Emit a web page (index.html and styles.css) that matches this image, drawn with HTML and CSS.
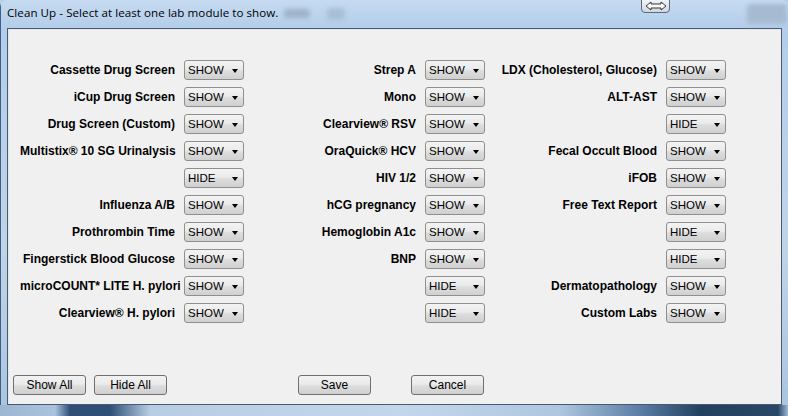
FILE: index.html
```html
<!DOCTYPE html>
<html>
<head>
<meta charset="utf-8">
<link rel="stylesheet" href="styles.css">
</head>
<body>
<div class="window">
  <div class="titlebar">
    <span class="title">Clean Up - Select at least one lab module to show.</span>
    <span class="blur b1"></span><span class="blur b2"></span><span class="blur b3"></span>
    <span class="resize"><svg width="22" height="10" viewBox="0 0 22 10"><path d="M1 5 L6 1 L6 3 L16 3 L16 1 L21 5 L16 9 L16 7 L6 7 L6 9 Z" fill="#fff" stroke="#333" stroke-width="1"/></svg></span>
  </div>
  <div class="client">
    <div class="grid">
      <span class="lbl">Cassette Drug Screen</span><span class="sel">SHOW</span>
      <span class="lbl">Strep A</span><span class="sel">SHOW</span>
      <span class="lbl">LDX (Cholesterol, Glucose)</span><span class="sel">SHOW</span>

      <span class="lbl">iCup Drug Screen</span><span class="sel">SHOW</span>
      <span class="lbl">Mono</span><span class="sel">SHOW</span>
      <span class="lbl">ALT-AST</span><span class="sel">SHOW</span>

      <span class="lbl">Drug Screen (Custom)</span><span class="sel">SHOW</span>
      <span class="lbl">Clearview® RSV</span><span class="sel">SHOW</span>
      <span class="lbl"></span><span class="sel">HIDE</span>

      <span class="lbl">Multistix® 10 SG Urinalysis</span><span class="sel">SHOW</span>
      <span class="lbl">OraQuick® HCV</span><span class="sel">SHOW</span>
      <span class="lbl">Fecal Occult Blood</span><span class="sel">SHOW</span>

      <span class="lbl"></span><span class="sel">HIDE</span>
      <span class="lbl">HIV 1/2</span><span class="sel">SHOW</span>
      <span class="lbl">iFOB</span><span class="sel">SHOW</span>

      <span class="lbl">Influenza A/B</span><span class="sel">SHOW</span>
      <span class="lbl">hCG pregnancy</span><span class="sel">SHOW</span>
      <span class="lbl">Free Text Report</span><span class="sel">SHOW</span>

      <span class="lbl">Prothrombin Time</span><span class="sel">SHOW</span>
      <span class="lbl">Hemoglobin A1c</span><span class="sel">SHOW</span>
      <span class="lbl"></span><span class="sel">HIDE</span>

      <span class="lbl">Fingerstick Blood Glucose</span><span class="sel">SHOW</span>
      <span class="lbl">BNP</span><span class="sel">SHOW</span>
      <span class="lbl"></span><span class="sel">HIDE</span>

      <span class="lbl">microCOUNT* LITE H. pylori</span><span class="sel">SHOW</span>
      <span class="lbl"></span><span class="sel">HIDE</span>
      <span class="lbl">Dermatopathology</span><span class="sel">SHOW</span>

      <span class="lbl">Clearview® H. pylori</span><span class="sel">SHOW</span>
      <span class="lbl"></span><span class="sel">HIDE</span>
      <span class="lbl">Custom Labs</span><span class="sel">SHOW</span>
    </div>
    <div class="buttons">
      <button class="btn">Show All</button>
      <button class="btn">Hide All</button>
      <button class="btn save">Save</button>
      <button class="btn cancel">Cancel</button>
    </div>
  </div>
</div>
</body>
</html>
```

FILE: styles.css
```css
html, body {
  margin: 0;
  padding: 0;
  background: #b8d0ea;
}
.window {
  width: 788px;
  height: 416px;
  box-sizing: border-box;
  display: flex;
  flex-direction: column;
  padding: 0 6px 11px 7px;
  border-radius: 7px 7px 0 0;
  background:
    linear-gradient(90deg, #3d5f86 0 1px, transparent 1px),
    linear-gradient(180deg, #c6dbf1 0px, #b3cdea 28px, #c0d4e8 60%, #aac4df 100%);
  position: relative;
  overflow: hidden;
  font-family: "Liberation Sans", Arial, sans-serif;
}
.window::after {
  content: "";
  position: absolute;
  left: 0; right: 0; bottom: 0;
  height: 11px;
  background: linear-gradient(90deg, #9db7d3 0px, #a9c3de 55px, #2f4f76 70px, #2f4f76 110px, #b7cde4 150px, #c3d7ec 400px, #aec6e0 560px, #5b7ea5 640px, #23405f 700px, #2a4768 778px, #9fb9d6 788px);
}
.titlebar {
  height: 28px;
  position: relative;
  display: flex;
  align-items: flex-start;
}
.title {
  margin-top: 5px;
  font-family: "Open Sans", "Liberation Sans", sans-serif;
  font-size: 11.6px;
  color: #000;
  letter-spacing: 0.05px;
  position: relative;
  z-index: 1;
}
.blur {
  position: absolute;
  border-radius: 4px;
  filter: blur(2px);
}
.b1 { left: 277px; top: 9px; width: 26px; height: 9px; background: #9fb3c8; }
.b2 { left: 320px; top: 8px; width: 18px; height: 12px; background: #a8bfd6; }
.b3 { left: 740px; top: 4px; width: 40px; height: 20px; background: #a6bbd1; }
.resize {
  position: absolute;
  left: 634px;
  top: -2px;
  width: 29px;
  height: 15px;
  box-sizing: border-box;
  border: 1px solid #5d6a78;
  border-radius: 0 0 4px 4px;
  background: linear-gradient(180deg, #f4f6f9, #cfd7e1);
  display: flex;
  align-items: center;
  justify-content: center;
}
.client {
  flex: 1;
  background: #f0f0f0;
  border: 1px solid #4a5a6c;
  box-shadow: inset 1px 1px 0 #e3e8ee;
  display: flex;
  flex-direction: column;
  padding: 31px 0 9px 0;
}
.grid {
  display: grid;
  grid-template-columns: 155px 60px 163px 60px 163px 60px;
  grid-auto-rows: 20px;
  column-gap: 9px;
  row-gap: 7px;
  padding-left: 12px;
}
.lbl {
  text-align: right;
  font-weight: bold;
  font-size: 12px;
  color: #000;
  line-height: 20px;
  white-space: nowrap;
  letter-spacing: 0;
}
.sel {
  box-sizing: border-box;
  height: 20px;
  border: 1px solid #8f8f8f;
  border-radius: 3px;
  background: linear-gradient(180deg, #f3f3f3 0%, #ebebeb 45%, #dddddd 55%, #d0d0d0 100%);
  font-size: 11.5px;
  line-height: 18px;
  padding-left: 3px;
  color: #000;
  position: relative;
}
.sel::after {
  content: "";
  position: absolute;
  right: 5px;
  top: 8px;
  border-left: 3.5px solid transparent;
  border-right: 3.5px solid transparent;
  border-top: 4px solid #000;
}
.buttons {
  margin-top: auto;
  display: flex;
  padding-left: 5px;
}
.btn {
  width: 73px;
  height: 20px;
  box-sizing: border-box;
  border: 1px solid #707070;
  border-radius: 3px;
  background: linear-gradient(180deg, #f2f2f2 0%, #ebebeb 45%, #dddddd 55%, #cfcfcf 100%);
  font-family: "Liberation Sans", Arial, sans-serif;
  font-size: 12px;
  color: #000;
  padding: 0;
  margin-right: 8px;
}
.save { margin-left: 123px; margin-right: 0; }
.cancel { margin-left: 40px; }
```
